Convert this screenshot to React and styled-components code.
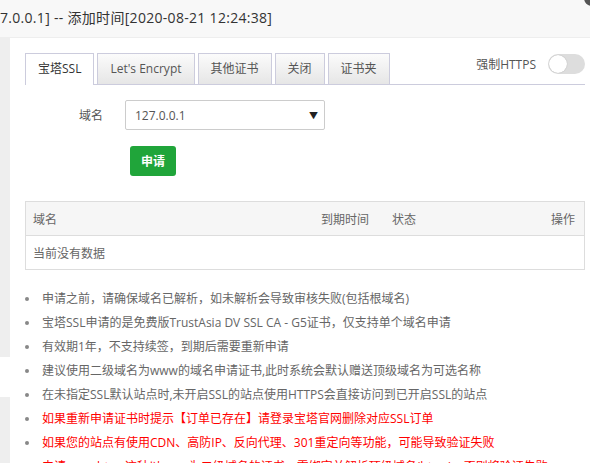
import React from 'react';
import styled, { createGlobalStyle } from 'styled-components';

const GlobalStyle = createGlobalStyle`
  html, body {
    margin: 0;
    padding: 0;
    background: #fff;
    overflow: hidden;
  }
  body {
    font-family: 'Open Sans', 'Noto Sans CJK SC', sans-serif;
  }
`;

const Window = styled.div`
  position: relative;
  width: 590px;
  height: 463px;
  overflow: hidden;
  display: flex;
  flex-direction: column;
`;

const TitleBar = styled.div`
  height: 37px;
  flex: none;
  background: #f8f8f8;
  border-bottom: 1px solid #eee;
  color: #333;
  font-size: 14px;
  letter-spacing: 0.3px;
  line-height: 35px;
  white-space: nowrap;
  padding-left: 0;
`;

const CloseDot = styled.div`
  position: absolute;
  right: -10px;
  top: -10px;
  width: 16px;
  height: 16px;
  border-radius: 50%;
  background: #555;
`;

const Body = styled.div`
  flex: 1;
  display: flex;
  min-height: 0;
`;

const SideMenu = styled.div`
  width: 10px;
  flex: none;
  display: flex;
  flex-direction: column;
`;

const MenuItem = styled.div`
  height: ${p => (p.h ? `${p.h}px` : 'auto')};
  flex: ${p => (p.h ? 'none' : '1')};
  background: ${p => (p.active ? '#fff' : '#eee')};
`;

const Content = styled.div`
  flex: 1;
  padding: 15px 5px 0 15px;
  color: #666;
  font-size: 12px;
`;

const TabBar = styled.div`
  display: flex;
  justify-content: space-between;
  align-items: flex-start;
  border-bottom: 1px solid #ccd;
  height: 31px;
`;

const Tabs = styled.div`
  display: flex;
`;

const Tab = styled.div`
  line-height: 30px;
  padding: 0 12px;
  margin-right: 3px;
  border: 1px solid #ccd;
  border-bottom: none;
  font-size: 12px;
  color: ${p => (p.active ? '#333' : '#555')};
  background: ${p => (p.active ? '#fff' : 'linear-gradient(#fbfbfb, #e6e6e6)')};
  height: ${p => (p.active ? '31px' : '30px')};
  white-space: nowrap;
`;

const ForceHttps = styled.div`
  display: flex;
  align-items: center;
  gap: 12px;
  margin-top: 1px;
  font-size: 12px;
  color: #555;
`;

const Switch = styled.div`
  position: relative;
  width: 37px;
  height: 20px;
  border-radius: 10px;
  background: #ddd;
`;

const Knob = styled.div`
  position: absolute;
  left: 1px;
  top: 1px;
  width: 18px;
  height: 18px;
  border-radius: 50%;
  background: #fff;
  box-shadow: 0 0 1px rgba(0, 0, 0, 0.3);
`;

const FormRow = styled.div`
  display: flex;
  align-items: center;
  margin-top: 15px;
`;

const Label = styled.div`
  width: 78px;
  margin-right: 22px;
  text-align: right;
  color: #555;
  font-size: 12px;
`;

const Select = styled.div`
  box-sizing: border-box;
  width: 200px;
  height: 30px;
  border: 1px solid #ccc;
  border-radius: 2px;
  display: flex;
  align-items: center;
  justify-content: space-between;
  padding: 0 6px 0 9px;
  color: #555;
  font-size: 12px;
`;

const Arrow = styled.span`
  font-size: 9px;
  color: #222;
`;

const ApplyButton = styled.button`
  display: block;
  margin: 16px 0 0 105px;
  width: 46px;
  height: 30px;
  border: none;
  border-radius: 3px;
  background: #20a53a;
  color: #fff;
  font-family: 'Open Sans', 'Noto Sans CJK SC', sans-serif;
  font-size: 12px;
  font-weight: bold;
  padding: 0;
`;

const Table = styled.div`
  margin-top: 25px;
  border: 1px solid #ddd;
`;

const Row = styled.div`
  display: grid;
  grid-template-columns: 1fr 71px 143px 40px;
  height: 33px;
  align-items: center;
  padding: 0 9px 0 7px;
  background: ${p => (p.head ? '#f6f6f6' : '#fff')};
  border-top: ${p => (p.head ? 'none' : '1px solid #ddd')};
  color: #666;
`;

const Cell = styled.div`
  text-align: ${p => (p.right ? 'right' : 'left')};
  white-space: nowrap;
`;

const Notes = styled.ul`
  margin: 17px 0 0;
  padding: 0 0 0 17px;
  list-style: none;
`;

const Note = styled.li`
  position: relative;
  line-height: 24px;
  height: 24px;
  white-space: nowrap;
  color: ${p => (p.warn ? '#f00' : '#666')};
  &::before {
    content: '';
    position: absolute;
    left: -17px;
    top: 10px;
    width: 4px;
    height: 4px;
    border-radius: 50%;
    background: #888;
  }
`;

const notes = [
  ['申请之前，请确保域名已解析，如未解析会导致审核失败(包括根域名)'],
  ['宝塔SSL申请的是免费版TrustAsia DV SSL CA - G5证书，仅支持单个域名申请'],
  ['有效期1年，不支持续签，到期后需要重新申请'],
  ['建议使用二级域名为www的域名申请证书,此时系统会默认赠送顶级域名为可选名称'],
  ['在未指定SSL默认站点时,未开启SSL的站点使用HTTPS会直接访问到已开启SSL的站点'],
  ['如果重新申请证书时提示【订单已存在】请登录宝塔官网删除对应SSL订单', true],
  ['如果您的站点有使用CDN、高防IP、反向代理、301重定向等功能，可能导致验证失败', true],
  ['申请www.bt.cn这种以www为二级域名的证书，需绑定并解析顶级域名(bt.cn)，否则将验证失败', true],
];

const tabs = ['宝塔SSL', "Let's Encrypt", '其他证书', '关闭', '证书夹'];

export default function App() {
  return (
    <Window>
      <GlobalStyle />
      <TitleBar>7.0.0.1] -- 添加时间[2020-08-21 12:24:38]</TitleBar>
      <CloseDot />
      <Body>
        <SideMenu>
          <MenuItem h={319} />
          <MenuItem h={40} active />
          <MenuItem />
        </SideMenu>
        <Content>
          <TabBar>
            <Tabs>
              {tabs.map((t, i) => (
                <Tab key={t} active={i === 0}>{t}</Tab>
              ))}
            </Tabs>
            <ForceHttps>
              强制HTTPS
              <Switch><Knob /></Switch>
            </ForceHttps>
          </TabBar>
          <FormRow>
            <Label>域名</Label>
            <Select>
              127.0.0.1
              <Arrow>▼</Arrow>
            </Select>
          </FormRow>
          <ApplyButton>申请</ApplyButton>
          <Table>
            <Row head>
              <Cell>域名</Cell>
              <Cell>到期时间</Cell>
              <Cell>状态</Cell>
              <Cell right>操作</Cell>
            </Row>
            <Row>
              <Cell>当前没有数据</Cell>
            </Row>
          </Table>
          <Notes>
            {notes.map(([text, warn]) => (
              <Note key={text} warn={warn}>{text}</Note>
            ))}
          </Notes>
        </Content>
      </Body>
    </Window>
  );
}
